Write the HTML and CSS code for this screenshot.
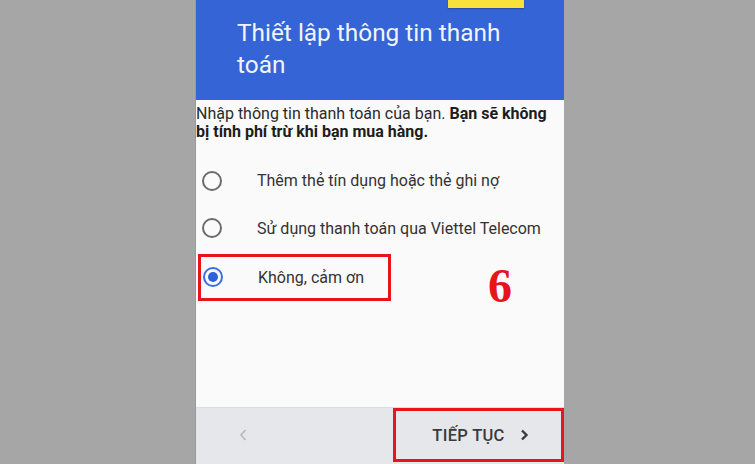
FILE: index.html
```html
<!DOCTYPE html>
<html lang="vi">
<head>
<meta charset="utf-8">
<title>Thiết lập thông tin thanh toán</title>
<link rel="stylesheet" href="styles.css">
</head>
<body>
<div class="stage">
  <div class="screen">
    <header class="header">
      <span class="tab"></span>
      <h1 class="title">Thiết lập thông tin thanh toán</h1>
    </header>
    <main class="content">
      <p class="intro">Nhập thông tin thanh toán của bạn. <b>Bạn sẽ không bị tính phí trừ khi bạn mua hàng.</b></p>
      <ul class="options">
        <li class="option"><span class="radio"></span><span class="label">Thêm thẻ tín dụng hoặc thẻ ghi nợ</span></li>
        <li class="option"><span class="radio"></span><span class="label">Sử dụng thanh toán qua Viettel Telecom</span></li>
        <li class="option selected-row">
          <span class="highlight"><span class="radio checked"></span><span class="label">Không, cảm ơn</span></span>
          <span class="step">6</span>
        </li>
      </ul>
    </main>
    <footer class="navbar">
      <span class="back">
        <svg width="10" height="14" viewBox="0 0 10 14"><path d="M7.5 2 L3 7 L7.5 12" fill="none" stroke="#b9bcc0" stroke-width="1.8"/></svg>
      </span>
      <span class="next">
        <span class="next-text">TIẾP TỤC</span>
        <svg width="10" height="14" viewBox="0 0 10 14"><path d="M3 2.5 L7.5 7 L3 11.5" fill="none" stroke="#3a3a3a" stroke-width="2.4"/></svg>
      </span>
    </footer>
  </div>
</div>
</body>
</html>
```
FILE: styles.css
```css
* { box-sizing: border-box; }
html, body { margin: 0; height: 100%; }
body {
  background: #a6a6a6;
  font-family: Roboto, "Noto Sans", sans-serif;
  overflow: hidden;
}
.stage {
  display: flex;
  height: 464px;
  padding-left: 195px;
}
.screen {
  width: 369px;
  height: 464px;
  display: flex;
  flex-direction: column;
  background: #fafafa;
  border-left: 1px solid #9a9a9a;
}
.header {
  position: relative;
  height: 100px;
  background: #3464d5;
  padding: 17px 20px 0 41px;
}
.tab {
  position: absolute;
  top: 0;
  left: 252px;
  width: 76px;
  height: 8px;
  background: #f7e13a;
  box-shadow: 0 1px 2px rgba(0,0,0,0.25);
}
.title {
  margin: 0;
  color: #f2f4fb;
  font-weight: 400;
  font-size: 24.4px;
  line-height: 32px;
}
.content {
  flex: 1;
  padding: 5px 6px 0 0;
}
.intro {
  margin: 0;
  color: #2b2b2b;
  font-size: 16px;
  line-height: 17.5px;
}
.intro b { color: #1d1d1d; }
.options {
  list-style: none;
  margin: 17px 0 0;
  padding: 0;
}
.option {
  display: flex;
  align-items: center;
  height: 47.5px;
  font-size: 16px;
  color: #333;
}
.radio {
  flex: none;
  width: 20px;
  height: 20px;
  margin-left: 6px;
  border: 2px solid #6b6b6b;
  border-radius: 50%;
  display: flex;
  align-items: center;
  justify-content: center;
}
.radio.checked { border-color: #3b6fe0; }
.radio.checked::after {
  content: "";
  width: 10px;
  height: 10px;
  border-radius: 50%;
  background: #2f62d8;
}
.label { margin-left: 35px; }
.selected-row { position: relative; }
.highlight {
  display: flex;
  align-items: center;
  width: 193px;
  height: 47px;
  margin-left: 2px;
  margin-top: 3px;
  border: 3px solid #e8141c;
}
.highlight .radio { margin-left: 2px; }
.highlight .label { margin-left: 35px; }
.step {
  position: absolute;
  left: 292px;
  top: 6px;
  font-family: "Liberation Serif", serif;
  font-weight: 700;
  font-size: 48px;
  color: #e8141c;
  line-height: 56px;
}
.navbar {
  height: 57px;
  background: #e5e7eb;
  border-top: 1px solid #dcdde0;
  display: flex;
  align-items: flex-start;
  justify-content: space-between;
}
.back {
  margin-left: 42px;
  margin-top: 20px;
  display: flex;
}
.next {
  height: 54px;
  width: 171px;
  border: 3px solid #e8141c;
  display: flex;
  align-items: center;
  justify-content: center;
  gap: 14px;
  padding-left: 4px;
}
.next-text {
  font-size: 16.5px;
  letter-spacing: 0.3px;
  color: #3a3a3a;
  font-weight: 500;
}
```
